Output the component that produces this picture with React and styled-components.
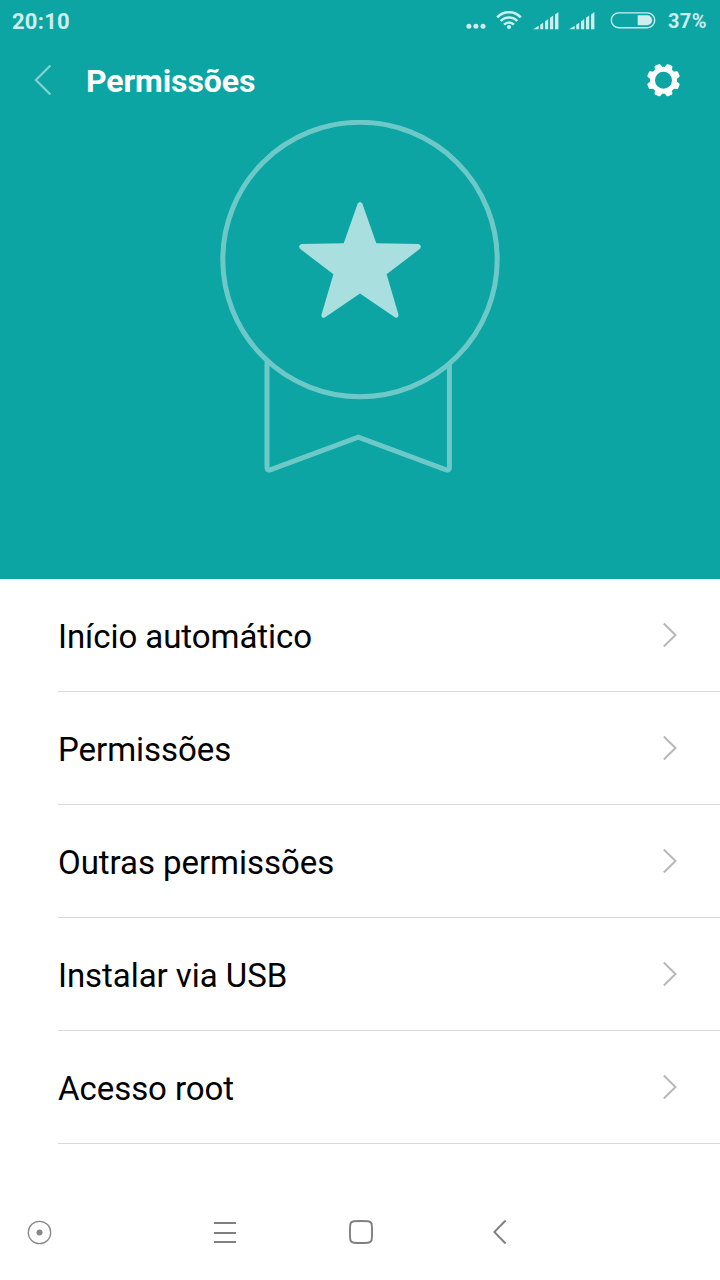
import styled, { createGlobalStyle } from "styled-components";

const permissions = [
    "Início automático",
    "Permissões",
    "Outras permissões",
    "Instalar via USB",
    "Acesso root",
];

const teeth = [22.5, 67.5, 112.5, 157.5, 202.5, 247.5, 292.5, 337.5];


function Signal(){
    return(
        <svg width="26" height="18" viewBox="0 0 26 18" fill="currentColor">
            <path d="M0 17.3 L5.7 13.8 V17.3 Z" />
            <path d="M7.2 12.7 L10.2 10.7 V17.3 H7.2 Z" />
            <path d="M12 9.4 L15.2 7.1 V17.3 H12 Z" />
            <path d="M17 5.8 L20.2 3.5 V17.3 H17 Z" />
            <path d="M22 2.4 L25.4 0 V17.3 H22 Z" />
        </svg>
    )
}

function StatusBar(){
    return(
        <StatusBarStyle>
            <Clock>20:10</Clock>
            <StatusIcons>
                <DotsIcon width="20" height="6" viewBox="0 0 20 6" fill="currentColor">
                    <circle cx="2.9" cy="3.3" r="2.5" />
                    <circle cx="9.9" cy="3.3" r="2.5" />
                    <circle cx="17" cy="3.3" r="2.5" />
                </DotsIcon>
                <WifiIcon width="26" height="20" viewBox="0 0 26 20" fill="none" stroke="currentColor" strokeWidth="2.5">
                    <path d="M1.2 7.3 A16.3 16.3 0 0 1 24.8 7.3" />
                    <path d="M4.7 11 A11.4 11.4 0 0 1 21.3 11" />
                    <path d="M8.1 14.6 A6.7 6.7 0 0 1 17.9 14.6" />
                    <circle cx="13" cy="17" r="2.1" fill="currentColor" stroke="none" />
                </WifiIcon>
                <Signal />
                <Signal />
                <BatteryIcon width="46" height="17" viewBox="0 0 46 17">
                    <rect x="1.3" y="0.9" width="43.4" height="14.8" rx="7.4" fill="none" stroke="currentColor" strokeWidth="1.4" />
                    <path d="M27.7 3.3 H37.1 A5 5 0 0 1 37.1 13.3 H27.7 Z" fill="currentColor" />
                </BatteryIcon>
            </StatusIcons>
            <Percent>37%</Percent>
        </StatusBarStyle>
    )
}

function Gear(){
    return(
        <svg width="34" height="34" viewBox="-16.5 -17.2 34 34">
            <circle r="11" fill="none" stroke="#fff" strokeWidth="5" />
            {teeth.map((deg) => (
                <path key={deg} transform={`rotate(${deg})`} d="M-4.2 -11.5 L-3.2 -15.4 Q-2.9 -16.6 -1.8 -16.6 H1.8 Q2.9 -16.6 3.2 -15.4 L4.2 -11.5 Z" fill="#fff" />
            ))}
        </svg>
    )
}

function Badge(){
    return(
        <svg width="280" height="354" viewBox="220 120 280 354">
            <g opacity="0.4" fill="none" stroke="#fff" strokeWidth="5">
                <circle cx="360" cy="259.5" r="137.2" />
                <path d="M267 361.5 V467.5 Q267 470.9 270.2 469.8 L358.3 437.2 L446.2 469.8 Q449.4 470.9 449.4 467.5 V364" />
            </g>
            <path
                d="M357.7 203.6 Q360 200.2 362.3 203.6 L376.3 243.2 L418.5 244 Q422.2 245.4 420 248.8 L386.6 274.2 L398.6 315 Q398.4 318.6 395.2 317.6 L360 293.4 L324.8 317.6 Q321.4 318.6 321.4 315 L333.4 274.2 L300 248.8 Q297.8 245.4 301.5 244 L343.7 243.2 Z"
                fill="#a9dfdf"
            />
        </svg>
    )
}


function App(){
    return(
        <>
        <GlobalStyle />
        <Screen>
            <Hero>
                <StatusBar />
                <Header>
                    <svg width="20" height="34" viewBox="0 0 20 34" fill="none" stroke="#fff" strokeOpacity="0.5" strokeWidth="2.1">
                        <path d="M17.4 2.5 L2.9 17 L17.4 31.5" />
                    </svg>
                    <Title>Permissões</Title>
                    <Gear />
                </Header>
                <Badge />
            </Hero>

            <List>
                {permissions.map((name) => (
                    <Item key={name}>
                        <span>{name}</span>
                        <svg width="16" height="26" viewBox="0 0 16 26" fill="none" stroke="#b8b8b8" strokeWidth="2">
                            <path d="M1.8 1.5 L13.5 13 L1.8 24.5" />
                        </svg>
                    </Item>
                ))}
            </List>

            {/* botões de navegação */}
            <NavBar>
                <svg width="25" height="25" viewBox="0 0 25 25" fill="none" stroke="#888" strokeWidth="1.3">
                    <circle cx="12.5" cy="12.5" r="11.2" />
                    <circle cx="12.5" cy="12.5" r="3" fill="#888" stroke="none" />
                </svg>
                <svg width="22" height="24" viewBox="0 0 22 24" fill="#808080">
                    <rect y="2" width="22" height="2" />
                    <rect y="12" width="22" height="2" />
                    <rect y="21" width="22" height="2" />
                </svg>
                <svg width="24" height="24" viewBox="0 0 24 24" fill="none" stroke="#808080" strokeWidth="1.9">
                    <path d="M5 1.2 Q12 0.8 19 1.2 Q22.5 1.5 22.8 5 Q23.3 12 22.8 19 Q22.5 22.5 19 22.8 Q12 23.3 5 22.8 Q1.5 22.5 1.2 19 Q0.7 12 1.2 5 Q1.5 1.5 5 1.2 Z" />
                </svg>
                <svg width="14" height="24" viewBox="0 0 14 24" fill="none" stroke="#808080" strokeWidth="2">
                    <path d="M12.6 0.5 L1.3 12 L12.6 23.5" />
                </svg>
            </NavBar>
        </Screen>
        </>
    )
}


const GlobalStyle = createGlobalStyle`
* {
    box-sizing: border-box;
}

body {
    margin: 0;
    background-color: white;
    font-family: Roboto, "Liberation Sans", sans-serif;
}

svg {
    display: block;
    flex-shrink: 0;
}
`;

const Screen = styled.div`
display: flex;
flex-direction: column;
width: 720px;
height: 1280px;
overflow: hidden;
`;

const Hero = styled.div`
display: flex;
flex-direction: column;
align-items: center;
height: 579px;
background-color: #0ca5a4;
`;

const StatusBarStyle = styled.div`
display: flex;
align-items: center;
width: 100%;
height: 42px;
padding: 0 13px 0 12px;
color: #ceeded;
`;

const Clock = styled.div`
flex: 1;
padding-top: 1px;
font-size: 22px;
font-weight: 700;
line-height: 42px;
letter-spacing: 0.25px;
`;

const Percent = styled.div`
width: 39px;
margin-left: 12px;
font-size: 20px;
font-weight: 700;
line-height: 42px;
letter-spacing: 0.4px;
white-space: nowrap;
`;

const StatusIcons = styled.div`
display: flex;
align-items: flex-end;
height: 18px;
gap: 10px;
`;

const DotsIcon = styled.svg`
margin-bottom: 1px;
`;

const WifiIcon = styled.svg`
margin-right: 1px;
`;

const BatteryIcon = styled.svg`
margin-left: 5px;
margin-bottom: 1px;
`;

const Header = styled.div`
display: flex;
align-items: center;
width: 100%;
height: 78px;
padding: 0 39px 2px 33px;
`;

const Title = styled.h1`
flex: 1;
margin: 0 0 0 33px;
padding-top: 2px;
color: white;
font-size: 32px;
font-weight: 700;
line-height: 40px;
letter-spacing: -0.1px;
`;

const List = styled.div`
display: flex;
flex-direction: column;
padding-left: 58px;
`;

const Item = styled.div`
display: flex;
align-items: center;
justify-content: space-between;
height: 113px;
padding-right: 42px;
border-bottom: 1px solid #d9d9d9;
color: black;
font-size: 33px;
line-height: 40px;

span {
    padding-top: 4px;
    letter-spacing: -0.05px;
}
`;

const NavBar = styled.div`
display: grid;
grid-template-columns: 187px 135px 144px 14px;
align-items: center;
height: 96px;
margin-top: auto;
padding-left: 27px;
`;


export default App;
